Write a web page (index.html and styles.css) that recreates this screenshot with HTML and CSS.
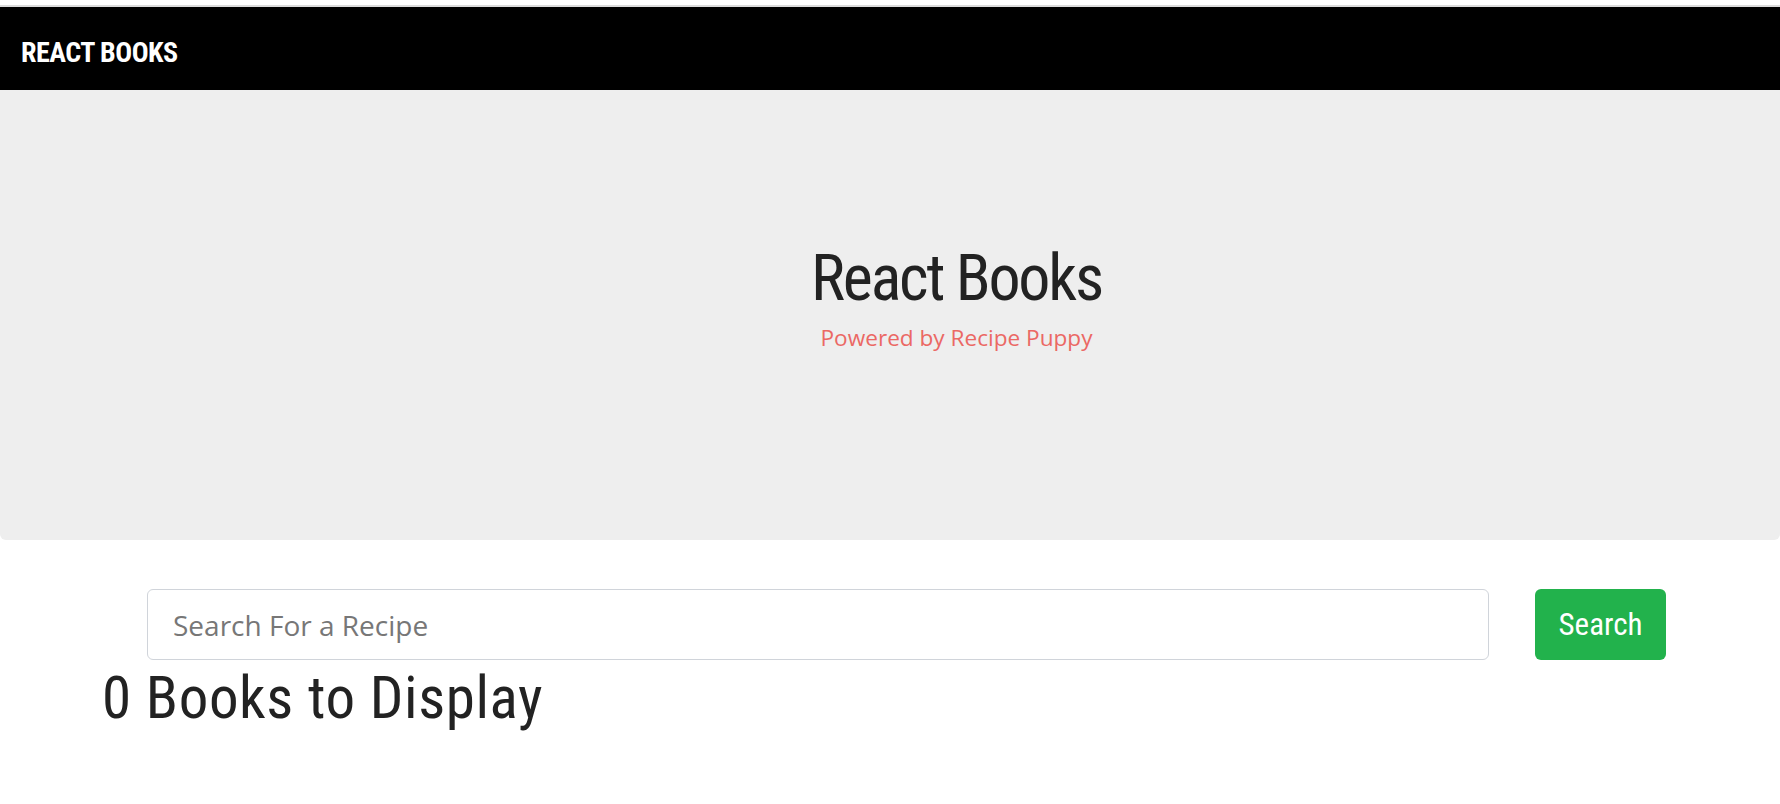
FILE: index.html
```html
<!DOCTYPE html>
<html lang="en">
<head>
<meta charset="utf-8">
<title>React Books</title>
<link rel="stylesheet" href="styles.css">
</head>
<body>
<div class="topline"></div>
<nav class="navbar">
  <span class="brand">REACT BOOKS</span>
</nav>
<header class="jumbotron">
  <h1 class="title">React Books</h1>
  <p class="lead">Powered by Recipe Puppy</p>
</header>
<main class="content">
  <form class="search-row">
    <input class="search-input" type="text" placeholder="Search For a Recipe">
    <button class="search-btn" type="button">Search</button>
  </form>
  <h2 class="count">0 Books to Display</h2>
</main>
</body>
</html>
```
FILE: styles.css
```css
* { box-sizing: border-box; }
html, body { margin: 0; padding: 0; }
body {
  background: #fff;
  font-family: "Open Sans", "Noto Sans", sans-serif;
  color: #222;
}
.topline {
  height: 7px;
  background: #fff;
  border-bottom: 2px solid #dcdcdc;
}
.navbar {
  height: 83px;
  background: #000;
  display: flex;
  align-items: flex-start;
  padding: 29px 0 0 21px;
}
.brand {
  font-family: "Roboto Condensed", sans-serif;
  font-weight: bold;
  font-size: 28px;
  line-height: 34px;
  letter-spacing: -0.5px;
  color: #fff;
}
.jumbotron {
  background: #eee;
  height: 450px;
  border-radius: 0 0 6px 6px;
  display: flex;
  flex-direction: column;
  align-items: center;
  padding: 151px 0 0 133px;
}
.title {
  margin: 0;
  font-family: "Roboto Condensed", sans-serif;
  font-weight: normal;
  font-size: 64px;
  line-height: 76px;
  letter-spacing: -2.2px;
  color: #222;
}
.lead {
  margin: 6px 0 0;
  font-size: 22.6px;
  line-height: 30px;
  color: #eb6864;
}
.content {
  padding: 49px 0 0 0;
}
.search-row {
  display: flex;
  gap: 46px;
  margin: 0 114px 0 147px;
}
.search-input {
  flex: 1;
  height: 71px;
  border: 1px solid #d0d4da;
  border-radius: 6px;
  padding: 0 25px;
  font-family: "Open Sans", "Noto Sans", sans-serif;
  font-size: 28px;
  color: #495057;
  background: #fff;
  outline: none;
}
.search-input::placeholder { color: #777; }
.search-btn {
  width: 131px;
  height: 71px;
  background: #22b24c;
  border: none;
  border-radius: 6px;
  color: #fff;
  font-family: "Roboto Condensed", sans-serif;
  font-size: 31px;
  font-weight: normal;
  padding: 0;
}
.count {
  margin: 3px 0 0 102px;
  font-family: "Roboto Condensed", sans-serif;
  font-weight: normal;
  font-size: 59px;
  line-height: 70px;
  letter-spacing: 0.6px;
  color: #222;
}
```
